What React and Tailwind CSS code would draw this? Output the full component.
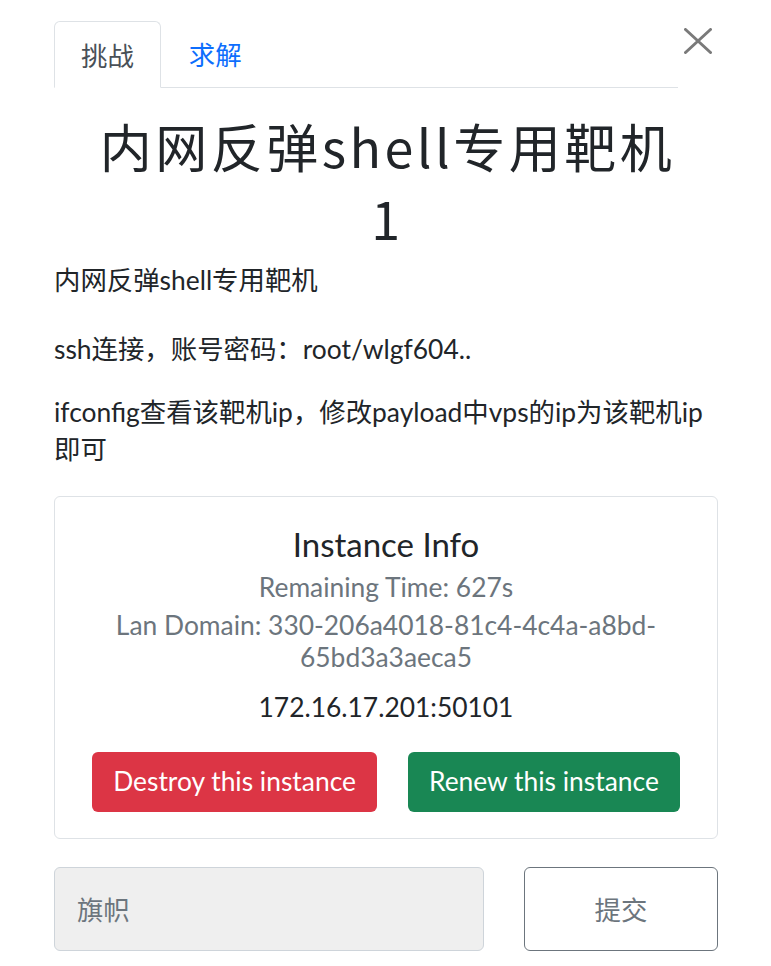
import React from "react";

export default function App() {
  const body = { fontFamily: 'Lato, "Noto Sans CJK SC", sans-serif' };
  const cjk = { fontFamily: '"Noto Sans CJK SC", sans-serif' };
  return (
    <div className="min-h-screen bg-white pl-[54px] pr-[53px] text-[#212529]" style={body}>
      <div className="flex items-start">
        <div className="flex flex-1 border-b border-[#dee2e6] pt-[21px]">
          <div
            className="-mb-px flex h-[67px] items-center rounded-t-[6px] border border-[#dee2e6] border-b-white bg-white px-[26px] text-[26.4px] text-[#495057]"
            style={cjk}
          >
            挑战
          </div>
          <div className="flex h-[66px] items-center px-[28px] text-[26.4px] text-[#0d6efd]" style={cjk}>
            求解
          </div>
        </div>
        <div className="flex w-[40px] justify-end pt-[28px] pr-[6px]">
          <svg width="28" height="26" viewBox="0 0 28 26">
            <path d="M1.5 1.5 L26.5 24.5 M26.5 1.5 L1.5 24.5" stroke="#7a7a7a" strokeWidth="3" strokeLinecap="round" />
          </svg>
        </div>
      </div>

      <h1
        className="mt-[22px] pl-[3px] text-center text-[52px] leading-[72px] font-normal tracking-[3.5px] text-[#212529]"
        style={cjk}
      >
        内网反弹shell专用靶机
        <br />1
      </h1>

      <div className="mt-[7px] text-[26.4px] leading-[38px]">
        <p>内网反弹shell专用靶机</p>
        <p className="mt-[31px]">ssh连接，账号密码：root/wlgf604..</p>
        <p className="mt-[26px] leading-[37px]">ifconfig查看该靶机ip，修改payload中vps的ip为该靶机ip即可</p>
      </div>

      <div className="mt-[28px] rounded-[6px] border border-[#dee2e6] px-[26px] pt-[28px] pb-[26px] text-center">
        <div className="text-[33px] leading-[38px]">Instance Info</div>
        <div className="mt-[5px] text-[26.4px] leading-[38px] text-[#6c757d]">Remaining Time: 627s</div>
        <div className="mt-[3px] text-[26.4px] leading-[32px] text-[#6c757d]">
          Lan Domain: 330-206a4018-81c4-4c4a-a8bd-
          <br />
          65bd3a3aeca5
        </div>
        <div className="mt-[15px] text-[26.4px] leading-[38px]">172.16.17.201:50101</div>
        <div className="mt-[26px] flex justify-center gap-[31px]">
          <button className="h-[60px] rounded-[6px] bg-[#dc3545] px-[21px] text-[26.4px] text-white">
            Destroy this instance
          </button>
          <button className="h-[60px] rounded-[6px] bg-[#198754] px-[21px] text-[26.4px] text-white">
            Renew this instance
          </button>
        </div>
      </div>

      <div className="mt-[28px] flex gap-[40px]">
        <div
          className="flex h-[84px] flex-1 items-center rounded-[6px] border border-[#ced4da] bg-[#efefef] px-[22px] text-[26.4px] text-[#6c757d]"
          style={cjk}
        >
          旗帜
        </div>
        <button
          className="flex h-[84px] w-[194px] items-center justify-center rounded-[6px] border border-[#6c757d] bg-white text-[26.4px] text-[#6c757d]"
          style={cjk}
        >
          提交
        </button>
      </div>
    </div>
  );
}
